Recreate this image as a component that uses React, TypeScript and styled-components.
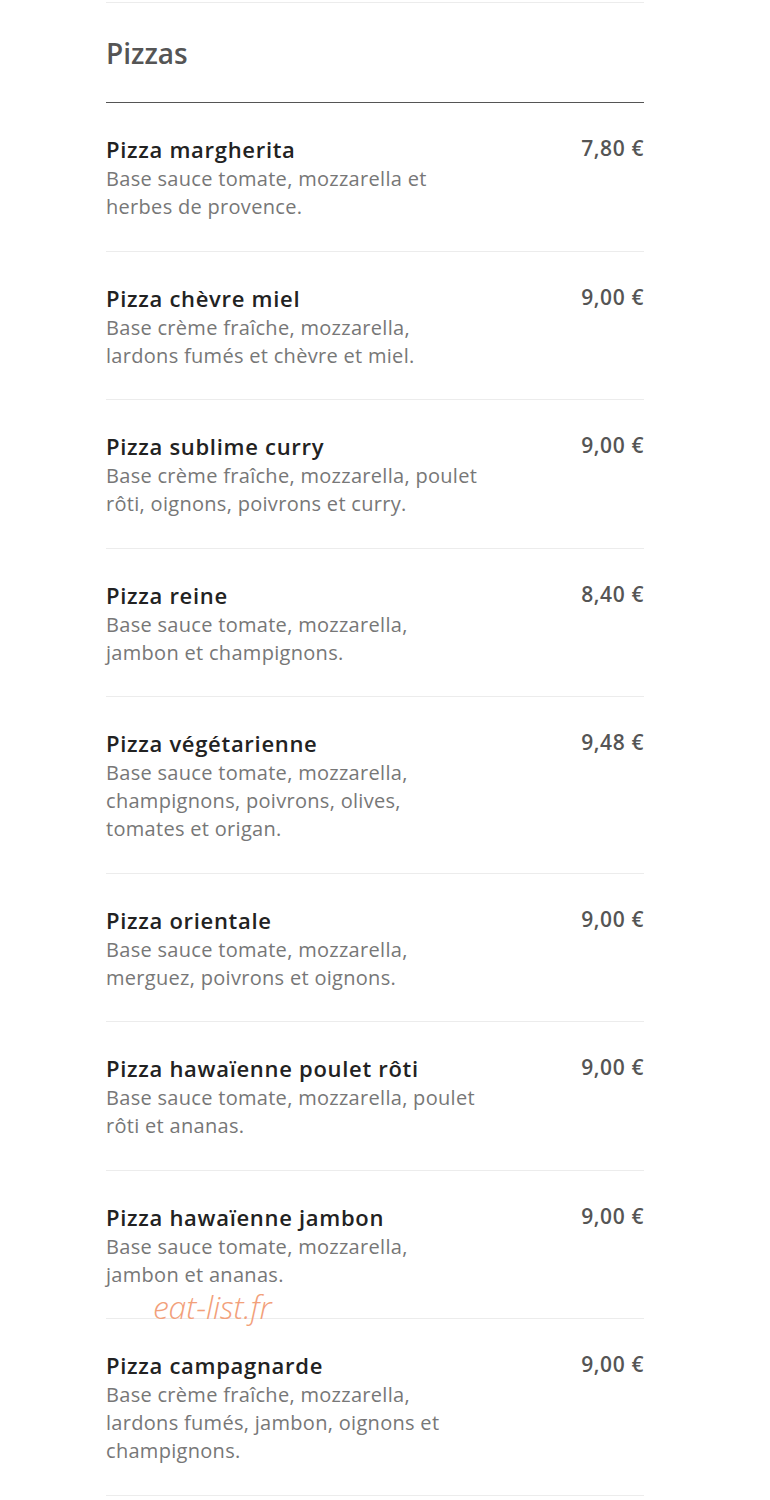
import React from 'react';
import styled, { createGlobalStyle } from 'styled-components';

interface Pizza {
  name: string;
  desc: string;
  price: string;
}

const pizzas: Pizza[] = [
  { name: 'Pizza margherita', desc: 'Base sauce tomate, mozzarella et herbes de provence.', price: '7,80 €' },
  { name: 'Pizza chèvre miel', desc: 'Base crème fraîche, mozzarella, lardons fumés et chèvre et miel.', price: '9,00 €' },
  { name: 'Pizza sublime curry', desc: 'Base crème fraîche, mozzarella, poulet rôti, oignons, poivrons et curry.', price: '9,00 €' },
  { name: 'Pizza reine', desc: 'Base sauce tomate, mozzarella, jambon et champignons.', price: '8,40 €' },
  { name: 'Pizza végétarienne', desc: 'Base sauce tomate, mozzarella, champignons, poivrons, olives, tomates et origan.', price: '9,48 €' },
  { name: 'Pizza orientale', desc: 'Base sauce tomate, mozzarella, merguez, poivrons et oignons.', price: '9,00 €' },
  { name: 'Pizza hawaïenne poulet rôti', desc: 'Base sauce tomate, mozzarella, poulet rôti et ananas.', price: '9,00 €' },
  { name: 'Pizza hawaïenne jambon', desc: 'Base sauce tomate, mozzarella, jambon et ananas.', price: '9,00 €' },
  { name: 'Pizza campagnarde', desc: 'Base crème fraîche, mozzarella, lardons fumés, jambon, oignons et champignons.', price: '9,00 €' },
];

const App = () => {
  return (
    <>
      <GlobalStyle />
      <Page>
        <Section>
          <Heading>Pizzas</Heading>
          <List>
            {pizzas.map((p) => (
              <Item key={p.name}>
                <Info>
                  <Name>{p.name}</Name>
                  <Desc>{p.desc}</Desc>
                </Info>
                <Price>{p.price}</Price>
              </Item>
            ))}
          </List>
          <Watermark>eat-list.fr</Watermark>
        </Section>
      </Page>
    </>
  );
};

export default App;

const GlobalStyle = createGlobalStyle`
  body {
    margin: 0;
    background: #fff;
    font-family: 'Open Sans', 'Noto Sans', sans-serif;
  }
`;

const Page = styled.div`
  width: 770px;
  height: 1500px;
  overflow: hidden;
  padding-top: 2px;
  box-sizing: border-box;
`;

const Section = styled.div`
  position: relative;
  margin-left: 106px;
  width: 538px;
  border-top: 1px solid #ececec;
`;

const Heading = styled.h2`
  margin: 0;
  padding: 32px 0 31px;
  font-size: 28px;
  line-height: 36px;
  font-weight: 600;
  color: #555;
  border-bottom: 1.5px solid #555;
`;

const List = styled.div`
  display: flex;
  flex-direction: column;
`;

const Item = styled.div`
  display: flex;
  justify-content: space-between;
  align-items: flex-start;
  padding: 31px 0 29.5px;
  border-bottom: 1px solid #ececec;
`;

const Info = styled.div`
  display: flex;
  flex-direction: column;
`;

const Name = styled.div`
  font-size: 22px;
  line-height: 31px;
  font-weight: 600;
  letter-spacing: 0.7px;
  color: #222;
`;

const Desc = styled.div`
  width: 378px;
  font-size: 20px;
  line-height: 28px;
  letter-spacing: 0.3px;
  color: #777;
`;

const Price = styled.div`
  font-size: 21px;
  line-height: 28px;
  font-weight: 600;
  letter-spacing: 0.6px;
  color: #555;
`;

const Watermark = styled.div`
  position: absolute;
  left: 47px;
  top: 1290px;
  font-size: 32px;
  line-height: 28px;
  font-weight: 300;
  font-style: italic;
  color: #f2a07a;
  letter-spacing: -0.2px;
`;
